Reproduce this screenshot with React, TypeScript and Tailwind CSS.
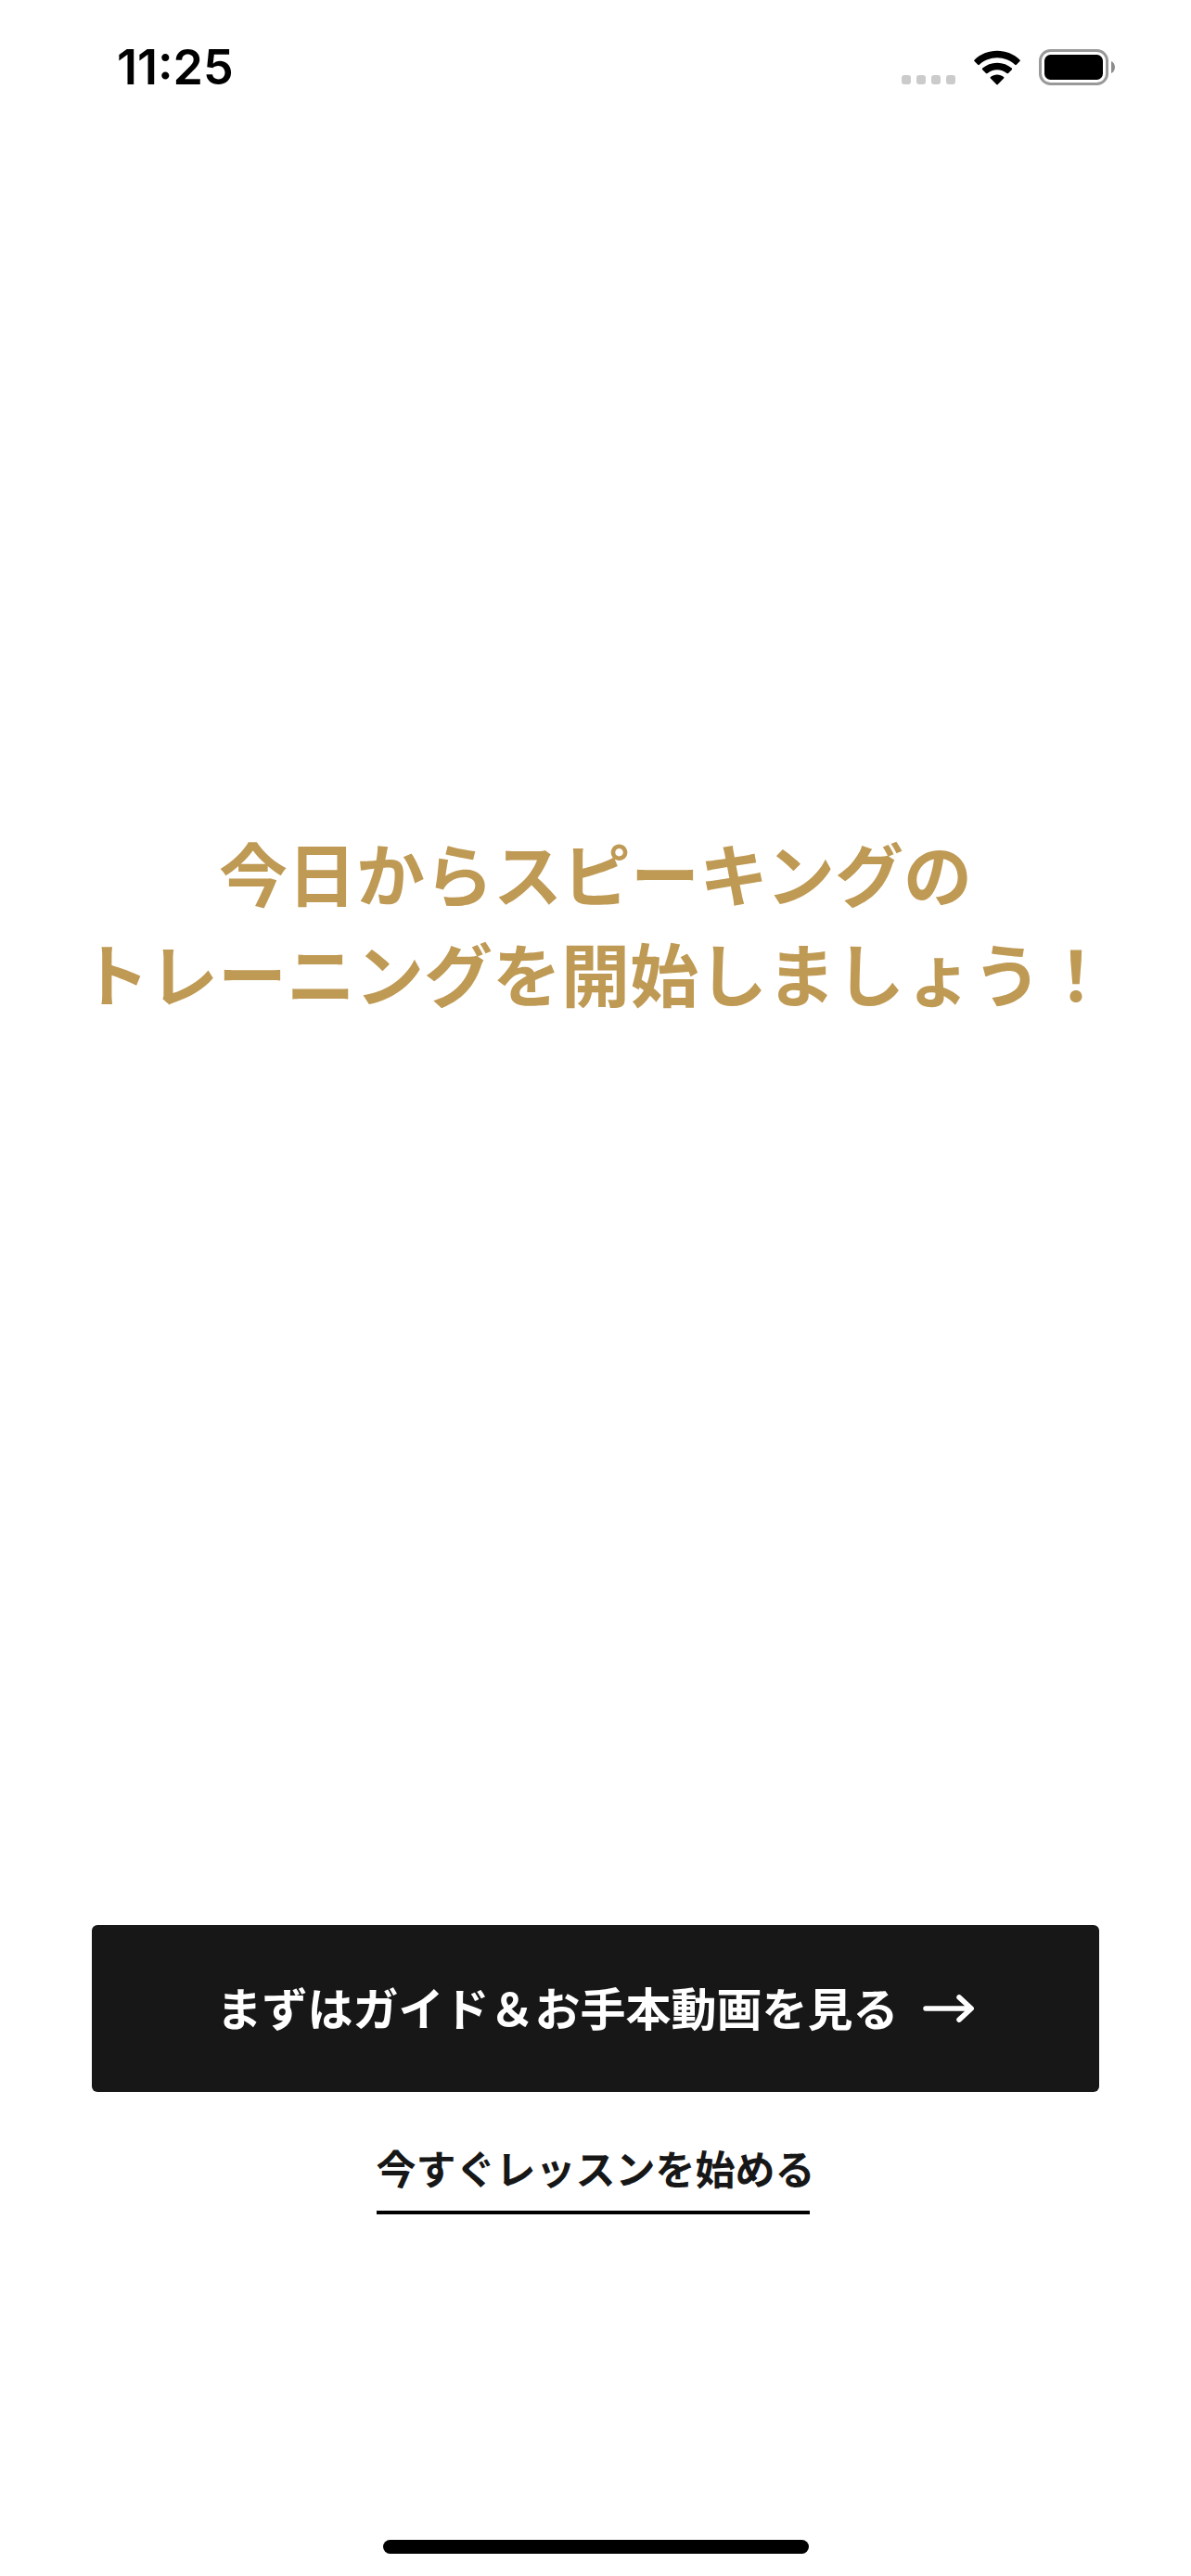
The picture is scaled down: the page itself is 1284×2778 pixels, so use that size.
import React from "react";

function CellularDots() {
  return (
    <div className="mb-px flex gap-1.5 self-end" aria-label="No signal">
      <span className="size-2.5 rounded-[3px] bg-[#cbcbcb]" />
      <span className="size-2.5 rounded-[3px] bg-[#cbcbcb]" />
      <span className="size-2.5 rounded-[3px] bg-[#cbcbcb]" />
      <span className="size-2.5 rounded-[3px] bg-[#cbcbcb]" />
    </div>
  );
}

function WifiIcon() {
  return (
    <svg width="50" height="38" viewBox="0 0 50 38" fill="#000" aria-label="Wi-Fi">
      <path d="M25 0.8C34.4 0.8 43 4.4 49.4 10.4Q50.2 11.2 49.5 12L45.8 15.8Q45 16.5 44.2 15.8C39.1 11.1 32.4 8.3 25 8.3S10.9 11.1 5.8 15.8Q5 16.5 4.2 15.8L0.5 12Q-0.2 11.2 0.6 10.4C7 4.4 15.6 0.8 25 0.8Z" />
      <path d="M25 13.7C31.1 13.7 36.6 16 40.8 19.6Q41.6 20.4 40.8 21.2L37 25Q36.2 25.7 35.4 25C32.6 22.6 29 21.2 25 21.2S17.4 22.6 14.6 25Q13.8 25.7 13 25L9.2 21.2Q8.4 20.4 9.2 19.6C13.4 16 18.9 13.7 25 13.7Z" />
      <path d="M25 26.5C27.7 26.5 30.2 27.4 32.1 29Q32.9 29.8 32.1 30.6L25.8 37Q25 37.8 24.2 37L17.9 30.6Q17.1 29.8 17.9 29C19.8 27.4 22.3 26.5 25 26.5Z" />
    </svg>
  );
}

function BatteryIcon() {
  return (
    <svg width="82" height="39" viewBox="0 0 82 39" aria-label="Battery full">
      <rect x="1.5" y="1.5" width="72" height="36" rx="11" fill="none" stroke="#999" strokeWidth="3" />
      <rect x="6" y="6" width="63" height="27" rx="6.5" fill="#000" />
      <path d="M78 13C80.4 14 82 16.6 82 19.5S80.4 25 78 26Z" fill="#8c8c8c" />
    </svg>
  );
}

function StatusBar() {
  return (
    <header className="flex h-[145px] items-center justify-between pr-[82px] pl-[126px]">
      <time className="font-['Inter',sans-serif] text-[52px] leading-none font-semibold text-black">11:25</time>
      <div className="flex items-center gap-5">
        <CellularDots />
        <WifiIcon />
        <BatteryIcon />
      </div>
    </header>
  );
}

function ArrowIcon() {
  return (
    <svg
      width="56"
      height="30"
      viewBox="0 0 56 30"
      fill="none"
      stroke="#fff"
      strokeWidth="5.5"
      strokeLinecap="round"
      strokeLinejoin="round"
      aria-hidden="true"
    >
      <path d="M3 15H52M39 2.9L52.2 15L39 27.1" />
    </svg>
  );
}

export default function App() {
  return (
    <div
      lang="ja"
      className="flex min-h-screen flex-col bg-white font-['Noto_Sans_CJK_JP',sans-serif]"
    >
      <StatusBar />
      <main className="flex grow flex-col px-[99px] pb-[351px]">
        <h1 className="mt-[741px] flex flex-col items-center text-[74px] leading-[108px] font-bold whitespace-nowrap text-[#bf9a55]">
          <span>今日からスピーキングの</span>
          <span>トレーニングを開始しましょう！</span>
        </h1>
        <div className="mt-auto flex flex-col items-center">
          <button
            type="button"
            className="flex h-[180px] w-full items-center justify-center gap-[26px] rounded-md bg-[#171717] text-[49px] leading-none font-bold text-white"
          >
            <span className="pb-1.5">まずはガイド＆お手本動画を見る</span>
            <ArrowIcon />
          </button>
          <a href="#lesson" className="mt-[46px] flex flex-col text-[43px] leading-[70px] font-bold text-[#171717]">
            <span>今すぐレッスンを始める</span>
            <span className="mt-3 mr-1.5 h-1 bg-black" />
          </a>
        </div>
      </main>
      <footer className="flex justify-center pb-6">
        <div className="h-[15px] w-[459px] rounded-full bg-black" />
      </footer>
    </div>
  );
}
